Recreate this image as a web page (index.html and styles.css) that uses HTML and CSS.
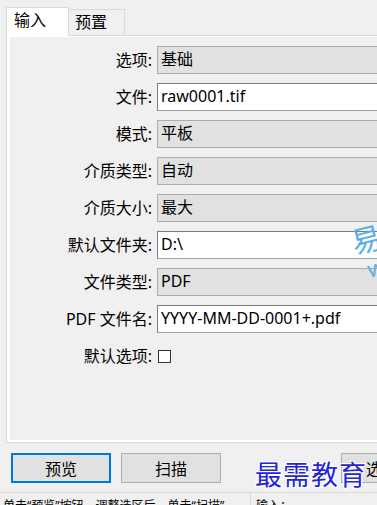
FILE: index.html
```html
<!DOCTYPE html>
<html>
    <head>
        <title>扫描</title>
        <link rel="stylesheet" href="styles.css">
    </head>
    <body>
        <div class="tabs">
            <div class="tab tab_active">输入</div>
            <div class="tab">预置</div>
        </div>

        <div class="page">
            <div class="form">
                <label class="label">选项:</label>
                <div class="combo">基础</div>

                <label class="label">文件:</label>
                <div class="text_box">raw0001.tif</div>

                <label class="label">模式:</label>
                <div class="combo">平板</div>

                <label class="label">介质类型:</label>
                <div class="combo">自动</div>

                <label class="label">介质大小:</label>
                <div class="combo">最大</div>

                <label class="label">默认文件夹:</label>
                <div class="text_box">D:\</div>

                <label class="label">文件类型:</label>
                <div class="combo">PDF</div>

                <label class="label">PDF 文件名:</label>
                <div class="text_box">YYYY-MM-DD-0001+.pdf</div>

                <label class="label">默认选项:</label>
                <div class="check_cell"><span class="checkbox"></span></div>
            </div>
        </div>

        <div class="buttons">
            <button class="button button_default">预览</button>
            <button class="button">扫描</button>
            <button class="button button_far">选项</button>
        </div>

        <div class="status">
            <div class="status_main">单击“预览”按钮，调整选区后，单击“扫描”</div>
            <div class="status_side">输入：</div>
        </div>

        <!-- watermarks over the screenshot -->
        <div class="mark_yi">易</div>
        <div class="mark_w">w</div>
        <div class="mark_logo">最需教育</div>
    </body>
</html>
```

FILE: styles.css
```css
body {
    margin: 0;
    width: 377px;
    height: 505px;
    overflow: hidden;
    position: relative;
    background-color: #f0f0f0;
    font-family: "Noto Sans", "Noto Sans CJK SC", sans-serif;
    font-size: 16px;
    color: #000;
}

.tabs {
    display: flex;
    align-items: flex-end;
    height: 28px;
    padding: 7px 0 0 6px;
}

.tab {
    box-sizing: border-box;
    width: 56px;
    height: 26px;
    padding-left: 6px;
    line-height: 24px;
    border: 1px solid #d9d9d9;
    border-left: none;
    border-bottom: none;
    background-color: #f0f0f0;
}

.tab_active {
    position: relative;
    z-index: 1;
    width: 63px;
    height: 29px;
    margin-bottom: -1px;
    padding-left: 7px;
    line-height: 24px;
    border-left: 1px solid #d9d9d9;
    background-color: #fff;
}

.page {
    margin-left: 6px;
    margin-right: -30px;
    height: 403px;
    border: 1px solid #d9d9d9;
    background-color: #fff;
    padding: 1px 0 2px 3px;
}

.form {
    height: 100%;
    background-color: #f0f0f0;
    display: grid;
    grid-template-columns: 142px 1fr;
    grid-auto-rows: 28px;
    column-gap: 5px;
    row-gap: 9px;
    align-content: start;
    padding-top: 9px;
    box-sizing: border-box;
}

.label {
    text-align: right;
    line-height: 28px;
    white-space: nowrap;
}

.combo,
.text_box {
    box-sizing: border-box;
    height: 28px;
    padding-left: 3px;
    line-height: 25px;
    white-space: nowrap;
}

.combo {
    background-color: #e1e1e1;
    border: 1px solid #adadad;
}

.text_box {
    background-color: #fff;
    border: 1px solid #7a7a7a;
    border-bottom-color: #a0a0a0;
}

.check_cell {
    display: flex;
    align-items: center;
    padding-left: 1px;
}

.checkbox {
    box-sizing: border-box;
    width: 13px;
    height: 13px;
    border: 1px solid #333;
    background-color: #fff;
}

.buttons {
    display: flex;
    gap: 10px;
    padding: 10px 0 0 11px;
    height: 30px;
}

.button {
    flex-shrink: 0;
    box-sizing: border-box;
    width: 100px;
    height: 30px;
    border: 1px solid #adadad;
    background-color: #e1e1e1;
    font-family: "Noto Sans", "Noto Sans CJK SC", sans-serif;
    font-size: 16px;
    color: #000;
    padding: 0;
}

.button_default {
    border: 2px solid #0078d7;
}

.button_far {
    margin-left: 110px;
    text-align: left;
    padding-left: 24px;
}

.status {
    display: flex;
    margin-top: 9px;
    border-top: 1px solid #dadada;
    height: 20px;
    font-size: 12px;
}

.status_main {
    width: 247px;
    padding: 3px 0 0 3px;
    border-right: 1px solid #dadada;
    white-space: nowrap;
    overflow: hidden;
}

.status_side {
    padding: 3px 0 0 5px;
}

.mark_yi {
    position: absolute;
    left: 351px;
    top: 216px;
    font-size: 30px;
    color: #5aaee6;
    transform: rotate(-14deg);
}

.mark_w {
    position: absolute;
    left: 367px;
    top: 252px;
    font-size: 22px;
    color: #5aaee6;
    transform: rotate(-14deg);
}

.mark_logo {
    position: absolute;
    left: 255px;
    top: 454px;
    font-family: "Noto Sans CJK SC", sans-serif;
    font-size: 27px;
    letter-spacing: 1px;
    color: #2424d8;
    text-shadow: 1px 1px 0 #fff, -1px -1px 0 #fff, 1px -1px 0 #fff, -1px 1px 0 #fff, 0 0 3px #fff;
}
```
